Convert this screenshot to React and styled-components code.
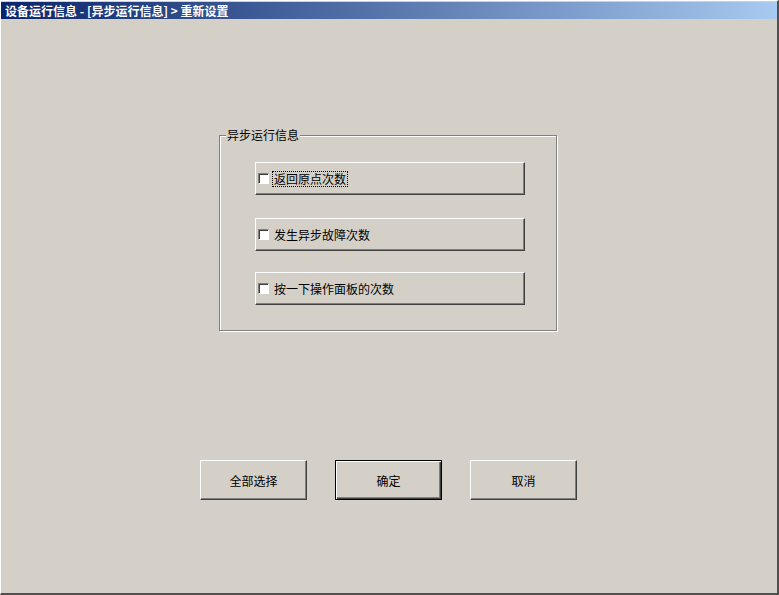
import React from 'react';
import styled, {createGlobalStyle} from 'styled-components';

const GlobalStyle = createGlobalStyle`
    html, body {
        margin: 0;
        padding: 0;
        background: #d4d0c8;
    }
    * {
        box-sizing: border-box;
    }
`;

const options = [
    {id: 'home', label: '返回原点次数', focused: true},
    {id: 'fault', label: '发生异步故障次数'},
    {id: 'panel', label: '按一下操作面板的次数'},
];

const actions = [
    {id: 'all', label: '全部选择'},
    {id: 'ok', label: '确定', primary: true},
    {id: 'cancel', label: '取消'},
];

const App = () => {
    return (
        <>
            <GlobalStyle/>
            <Window>
                <TitleBar>设备运行信息 - [异步运行信息] &gt; 重新设置</TitleBar>
                <Body>
                    <Group>
                        <Legend>异步运行信息</Legend>
                        <Stack>
                            {options.map(option => (
                                <CheckButton key={option.id}>
                                    <Box/>
                                    <CheckLabel $focused={option.focused}>{option.label}</CheckLabel>
                                </CheckButton>
                            ))}
                        </Stack>
                    </Group>
                    <Actions>
                        {actions.map(action => (
                            <ActionButton key={action.id} $primary={action.primary}>
                                {action.label}
                            </ActionButton>
                        ))}
                    </Actions>
                </Body>
            </Window>
        </>
    );
};

const Window = styled.div`
    width: 779px;
    height: 595px;
    display: flex;
    flex-direction: column;
    background: #d4d0c8;
    border-top: 1px solid #ffffff;
    border-left: 1px solid #ffffff;
    border-right: 2px solid #505050;
    border-bottom: 2px solid #505050;
    font-family: "Noto Sans CJK SC", "Liberation Sans", sans-serif;
    font-size: 12px;
    color: #000;
    overflow: hidden;
`;

const TitleBar = styled.div`
    height: 17px;
    margin-top: 1px;
    padding-left: 4px;
    display: flex;
    align-items: center;
    color: #ffffff;
    font-weight: 700;
    font-size: 12px;
    background: linear-gradient(to right, #0a246a, #a6caf0);
`;

const Body = styled.div`
    flex: 1;
    display: flex;
    flex-direction: column;
    align-items: flex-start;
`;

const Group = styled.fieldset`
    margin: 109px 0 0 218px;
    padding: 0;
    width: 338px;
    height: 203px;
    min-inline-size: 0;
    border: 1px solid #808080;
    box-shadow: inset 1px 1px 0 #ffffff, 1px 1px 0 #ffffff;
`;

const Legend = styled.legend`
    margin-left: 6px;
    padding: 0 1px;
    background: #d4d0c8;
    font-size: 12px;
    line-height: 14px;
    color: #000;
`;

const Stack = styled.div`
    padding: 20px 0 0 35px;
    display: flex;
    flex-direction: column;
    gap: 21px;
`;

const CheckButton = styled.div`
    width: 270px;
    height: 33px;
    display: flex;
    align-items: center;
    padding-left: 2px;
    gap: 4px;
    background: #d4d0c8;
    border: 1px solid;
    border-color: #ffffff #404040 #404040 #ffffff;
    box-shadow: inset -1px -1px 0 #808080;
    &:first-child {
        margin-bottom: 2px;
    }
`;

const Box = styled.span`
    width: 11px;
    height: 11px;
    flex: none;
    background: #ffffff;
    border: 1px solid;
    border-color: #808080 #ffffff #ffffff #808080;
    box-shadow: inset 1px 1px 0 #404040;
`;

const CheckLabel = styled.span`
    line-height: 14px;
    padding: 0 1px;
    outline: ${p => p.$focused ? '1px dotted #000' : 'none'};
`;

const Actions = styled.div`
    margin: 129px 0 0 199px;
    display: flex;
    gap: 28px;
`;

const ActionButton = styled.div`
    width: 107px;
    height: 40px;
    display: flex;
    align-items: center;
    justify-content: center;
    background: #d4d0c8;
    border: 1px solid;
    border-color: ${p => p.$primary ? '#000' : '#ffffff #404040 #404040 #ffffff'};
    box-shadow: ${p => p.$primary
        ? 'inset 1px 1px 0 #ffffff, inset -1px -1px 0 #404040, inset -2px -2px 0 #808080'
        : 'inset -1px -1px 0 #808080'};
    font-size: 12px;
`;

export default App;
